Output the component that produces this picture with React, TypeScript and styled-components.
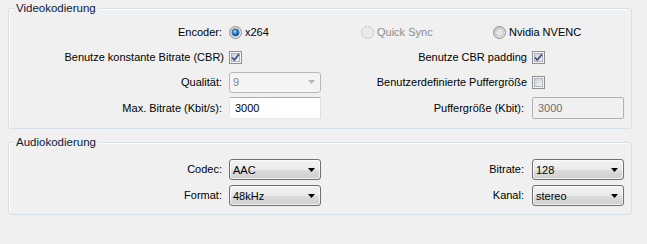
import React from 'react';
import styled, { createGlobalStyle } from 'styled-components';

const GlobalStyle = createGlobalStyle`
  html, body {
    margin: 0;
    padding: 0;
    background: #f0f0f0;
  }
  body {
    font-family: "Liberation Sans", Arial, sans-serif;
    font-size: 11px;
    color: #000;
  }
`;

const Page = styled.div`
  width: 647px;
  height: 244px;
  box-sizing: border-box;
  padding: 1px 15px 0 8px;
  display: flex;
  flex-direction: column;
  gap: 6px;
  overflow: hidden;
`;

const GroupBox = styled.fieldset`
  margin: 0;
  padding: 0;
  width: 624px;
  box-sizing: border-box;
  min-inline-size: 0;
  border: 1px solid #d5dfe5;
  border-radius: 3px;
  box-shadow: inset 1px 1px 0 #fff;
`;

const Title = styled.legend`
  margin-left: 5px;
  padding: 0 2px;
  line-height: 15px;
  font-size: 11.5px;
  color: #10183a;
  background: #f0f0f0;
`;

const Grid = styled.div<{ $top: number; $bottom: number; $gap: number; $rows: string }>`
  display: grid;
  grid-template-columns: 220px 92px 211px 92px;
  grid-template-rows: ${({ $rows }) => $rows};
  row-gap: ${({ $gap }) => $gap}px;
  padding: ${({ $top }) => $top}px 7px ${({ $bottom }) => $bottom}px 0;
  align-items: center;
`;

const Label = styled.div<{ $pad?: number }>`
  text-align: right;
  padding-right: ${({ $pad }) => $pad ?? 7}px;
  white-space: nowrap;
  line-height: 15px;
`;

const RadioRow = styled.div`
  grid-column: 2 / span 3;
  display: grid;
  grid-template-columns: repeat(3, 132px);
  align-items: center;
`;

const RadioItem = styled.div<{ $disabled?: boolean }>`
  display: flex;
  align-items: center;
  gap: 3px;
  color: ${({ $disabled }) => ($disabled ? '#8d8d8d' : '#000')};
  white-space: nowrap;
`;

const CheckBox = styled.div`
  width: 13px;
  height: 13px;
  display: flex;
`;

const Combo = styled.div<{ $disabled?: boolean }>`
  height: 21px;
  box-sizing: border-box;
  border: 1px solid ${({ $disabled }) => ($disabled ? '#b4b9bd' : '#707070')};
  border-radius: 3px;
  background: ${({ $disabled }) =>
    $disabled ? '#f4f4f4' : 'linear-gradient(#f2f2f2 0%, #ebebeb 50%, #dddddd 51%, #cfcfcf 100%)'};
  box-shadow: ${({ $disabled }) => ($disabled ? 'none' : 'inset 0 0 0 1px rgba(255,255,255,0.7)')};
  color: ${({ $disabled }) => ($disabled ? '#838383' : '#000')};
  display: flex;
  align-items: center;
  justify-content: space-between;
  padding: 0 5px 0 3px;
`;

const TextInput = styled.div<{ $disabled?: boolean }>`
  height: 22px;
  box-sizing: border-box;
  border: 1px solid ${({ $disabled }) => ($disabled ? '#adb2b5' : '#abadb3')};
  border-color: ${({ $disabled }) =>
    $disabled ? '#adb2b5' : '#abadb3 #dbdfe6 #e3e9ef #e2e3ea'};
  border-radius: 2px;
  background: ${({ $disabled }) => ($disabled ? '#f0f0f0' : '#fff')};
  color: ${({ $disabled }) => ($disabled ? '#6d6d6d' : '#000')};
  display: flex;
  align-items: center;
  padding: 0 5px;
`;

const Radio = ({ checked, disabled }: { checked?: boolean; disabled?: boolean }) => (
  <svg width="13" height="13" viewBox="0 0 13 13">
    <defs>
      <linearGradient id="rOuter" x1="0" y1="0" x2="1" y2="1">
        <stop offset="0" stopColor="#c5c5c5" />
        <stop offset="1" stopColor="#f7f7f7" />
      </linearGradient>
      <radialGradient id="rDot" cx="0.4" cy="0.35" r="0.7">
        <stop offset="0" stopColor="#a9e5ff" />
        <stop offset="0.45" stopColor="#2d8ed8" />
        <stop offset="1" stopColor="#0b3d7d" />
      </radialGradient>
    </defs>
    <circle cx="6.5" cy="6.5" r="6" fill={disabled ? '#f4f4f4' : 'url(#rOuter)'} stroke={disabled ? '#c6c6c6' : '#8e8f8f'} strokeWidth="1" />
    <circle cx="6.5" cy="6.5" r="4" fill={disabled ? '#ececec' : '#e6e6e6'} stroke={disabled ? '#e0e0e0' : '#b8b8b8'} strokeWidth="0.8" />
    {checked && <circle cx="6.5" cy="6.5" r="3.4" fill="url(#rDot)" stroke="#1c4f86" strokeWidth="0.6" />}
  </svg>
);

const Check = ({ checked }: { checked?: boolean }) => (
  <CheckBox>
    <svg width="13" height="13" viewBox="0 0 13 13">
      <defs>
        <linearGradient id="cIn" x1="0" y1="0" x2="1" y2="1">
          <stop offset="0" stopColor="#cbcfd5" />
          <stop offset="1" stopColor="#f6f6f6" />
        </linearGradient>
      </defs>
      <rect x="0.5" y="0.5" width="12" height="12" fill="#f4f4f4" stroke="#8e8f8f" />
      <rect x="2.5" y="2.5" width="8" height="8" fill="url(#cIn)" stroke="#aeb3b9" />
      {checked && (
        <path d="M3 6.5 L5.3 9 L10 3.2" fill="none" stroke="#3a4f8a" strokeWidth="1.8" strokeLinejoin="round" />
      )}
    </svg>
  </CheckBox>
);

const Arrow = ({ disabled }: { disabled?: boolean }) => (
  <svg width="7" height="4" viewBox="0 0 7 4">
    <path d="M0 0 H7 L3.5 4 Z" fill={disabled ? '#b5b5b5' : '#000'} />
  </svg>
);

const Select = ({ value, disabled }: { value: string; disabled?: boolean }) => (
  <Combo $disabled={disabled}>
    <span>{value}</span>
    <Arrow disabled={disabled} />
  </Combo>
);

export default function App() {
  return (
    <>
      <GlobalStyle />
      <Page>
        <GroupBox>
          <Title>Videokodierung</Title>
          <Grid $top={6} $bottom={9} $gap={5} $rows="20px 20px 20px 22px">
            <Label>Encoder:</Label>
            <RadioRow>
              <RadioItem>
                <Radio checked />
                x264
              </RadioItem>
              <RadioItem $disabled>
                <Radio disabled />
                Quick Sync
              </RadioItem>
              <RadioItem>
                <Radio />
                Nvidia NVENC
              </RadioItem>
            </RadioRow>

            <Label $pad={5}>Benutze konstante Bitrate (CBR)</Label>
            <Check checked />
            <Label $pad={5}>Benutze CBR padding</Label>
            <Check checked />

            <Label>Qualität:</Label>
            <Select value="9" disabled />
            <Label $pad={5}>Benutzerdefinierte Puffergröße</Label>
            <Check />

            <Label>Max. Bitrate (Kbit/s):</Label>
            <TextInput>3000</TextInput>
            <Label $pad={8}>Puffergröße (Kbit):</Label>
            <TextInput $disabled>3000</TextInput>
          </Grid>
        </GroupBox>

        <GroupBox>
          <Title>Audiokodierung</Title>
          <Grid $top={9} $bottom={8} $gap={5} $rows="21px 21px">
            <Label>Codec:</Label>
            <Select value="AAC" />
            <Label $pad={8}>Bitrate:</Label>
            <Select value="128" />

            <Label>Format:</Label>
            <Select value="48kHz" />
            <Label $pad={8}>Kanal:</Label>
            <Select value="stereo" />
          </Grid>
        </GroupBox>
      </Page>
    </>
  );
}
